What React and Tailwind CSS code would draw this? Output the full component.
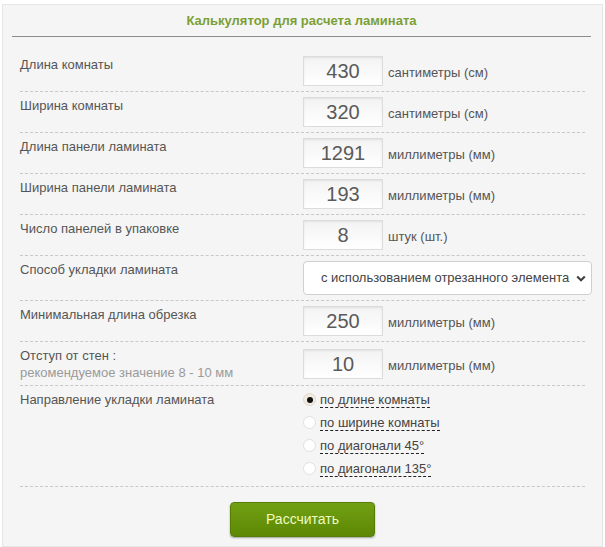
import React from 'react'

const rows = [
    { label: 'Длина комнаты', value: '430', unit: 'сантиметры (см)' },
    { label: 'Ширина комнаты', value: '320', unit: 'сантиметры (см)' },
    { label: 'Длина панели ламината', value: '1291', unit: 'миллиметры (мм)' },
    { label: 'Ширина панели ламината', value: '193', unit: 'миллиметры (мм)' },
    { label: 'Число панелей в упаковке', value: '8', unit: 'штук (шт.)' },
]

const directions = ['по длине комнаты', 'по ширине комнаты', 'по диагонали 45°', 'по диагонали 135°']

const NumberField = ({ value, unit }) => (
    <div className="flex items-center">
        <input
            type="text"
            readOnly
            value={value}
            className="w-[80px] h-[30px] text-center text-[20px] text-[#5a5a5a] bg-gradient-to-b from-[#f3f3f3] to-white border border-[#dcdcdc] shadow-[inset_0_1px_2px_rgba(0,0,0,0.08)] outline-none"
        />
        <span className="ml-[5px] mt-[3px] text-[13px] text-[#555]">{unit}</span>
    </div>
)

const Row = ({ children, label }) => (
    <div className="flex border-b border-dashed border-[#c8c8c8] py-[5px]">
        <div className="w-[283px] shrink-0 text-[13px] leading-[18px] text-[#555]">{label}</div>
        {children}
    </div>
)

export default function App() {
    return (
        <div className="min-h-[547px] bg-white pt-[4px] px-[2px] font-['Liberation_Sans',Arial,sans-serif]">
            <div className="min-h-[543px] bg-[#f5f5f5] border border-[#e6e6e6]">
                {/* Title */}
                <div className="ml-[9px] mr-[11px] h-[32px] pt-[1px] flex items-center justify-center border-b border-[#8c8c8c]">
                    <h1 className="text-[13px] font-bold text-[#7b9f35]">Калькулятор для расчета ламината</h1>
                </div>

                <div className="mx-[17px] mt-[14px]">
                    {rows.map((r) => (
                        <Row key={r.label} label={r.label}>
                            <NumberField value={r.value} unit={r.unit} />
                        </Row>
                    ))}

                    <Row label="Способ укладки ламината">
                        <div className="relative w-[289px] shrink-0 h-[34px] bg-white border border-[#cfcfcf] rounded-[4px] flex items-center pl-[17px]">
                            <span className="text-[13px] text-[#444]">с использованием отрезанного элемента</span>
                            <svg className="absolute right-[5px] top-[13px]" width="10" height="7" viewBox="0 0 10 7">
                                <path d="M1.2 1.5 L5 5.2 L8.8 1.5" fill="none" stroke="#444" strokeWidth="2.2" />
                            </svg>
                        </div>
                    </Row>

                    <Row label="Минимальная длина обрезка">
                        <NumberField value="250" unit="миллиметры (мм)" />
                    </Row>

                    <div className="flex border-b border-dashed border-[#c8c8c8] pt-[5px] pb-[4px]">
                        <div className="w-[283px] shrink-0 text-[13px] leading-[17px]">
                            <div className="text-[#555]">Отступ от стен :</div>
                            <div className="text-[#9a9a9a]">рекомендуемое значение 8 - 10 мм</div>
                        </div>
                        <NumberField value="10" unit="миллиметры (мм)" />
                    </div>

                    <div className="flex border-b border-dashed border-[#c8c8c8] pt-[2px] pb-[6px]">
                        <div className="w-[283px] shrink-0 pt-[3px] text-[13px] leading-[18px] text-[#555]">Направление укладки ламината</div>
                        <div className="flex flex-col">
                            {directions.map((d, i) => (
                                <label key={d} className="h-[23px] flex items-center">
                                    {i === 0 ? (
                                        <span className="w-[13px] h-[13px] rounded-full bg-[#f1ebe2] border border-[#e2d8c8] flex items-center justify-center">
                                            <span className="w-[6px] h-[6px] rounded-full bg-[#111]" />
                                        </span>
                                    ) : (
                                        <span className="w-[13px] h-[13px] rounded-full bg-white border border-[#e0e0e0]" />
                                    )}
                                    <span className="ml-[4px] text-[13px] leading-[15px] text-[#444] border-b border-dashed border-[#222]">{d}</span>
                                </label>
                            ))}
                        </div>
                    </div>
                </div>

                <div className="flex justify-center mt-[15px]">
                    <button className="w-[145px] h-[35px] rounded-[4px] bg-gradient-to-b from-[#72a012] to-[#5c8805] border border-[#557d06] shadow-[0_1px_2px_rgba(0,0,0,0.35)] text-[14px] text-[#eefbc0]">
                        Рассчитать
                    </button>
                </div>
            </div>
        </div>
    )
}
